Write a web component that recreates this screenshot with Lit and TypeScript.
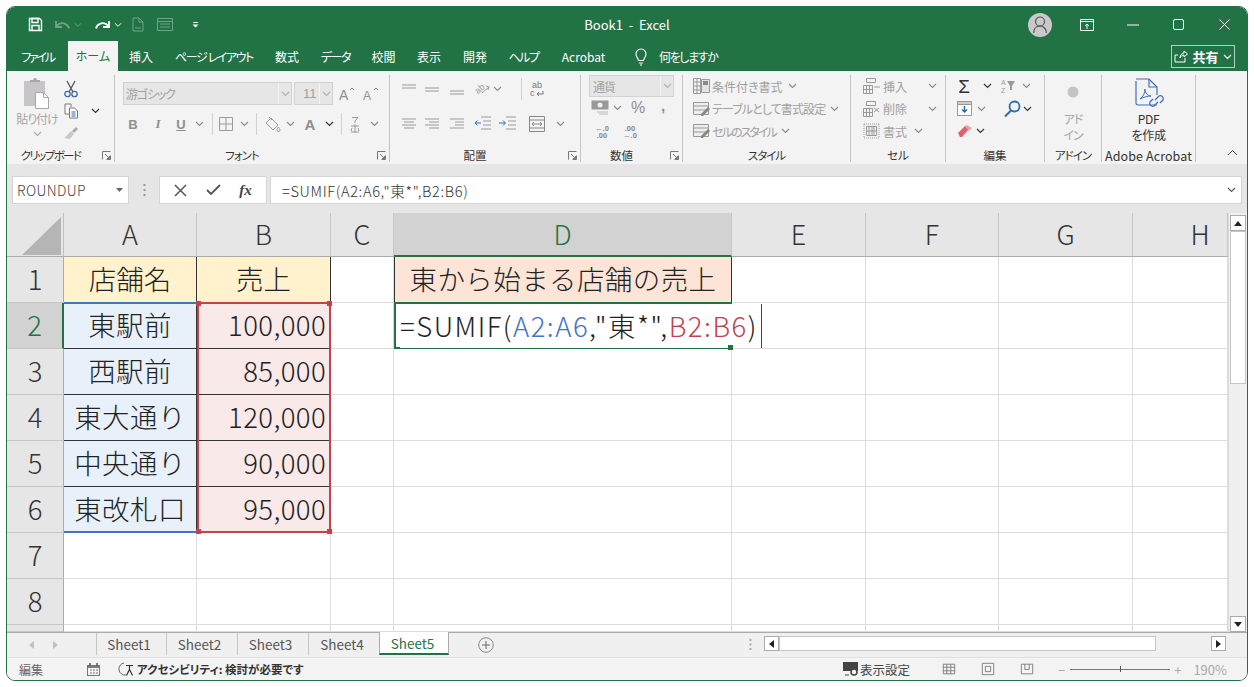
import { LitElement, html, css, TemplateResult } from "lit";
import { customElement } from "lit/decorators.js";

type Slot = [number, number, TemplateResult | string];

const GREY = "#9b9b9b";

const chev = (c = "#8a8a8a") => html`<svg width="9" height="6" viewBox="0 0 9 6"><path d="M1 1l3.5 3.5L8 1" fill="none" stroke=${c} stroke-width="1.1"/></svg>`;
const chevB = () => chev("#333");
const sep = () => html`<span class="vsep"></span>`;
const lines = (d: string, c = GREY, size = 16) => html`<svg width=${size} height=${size} viewBox="0 0 16 16"><path d=${d} fill="none" stroke=${c} stroke-width="1"/></svg>`;
const launcher = () => html`<svg width="9" height="9" viewBox="0 0 9 9"><path d="M.5 8.5v-8h8M4.5 8.5h4v-4M3 3l4.5 4.5M7.5 5v2.5H5" fill="none" stroke="#777" stroke-width="1"/></svg>`;

// places items by their centre x, leaving the gaps as flow margins
function placed(start: number, items: Slot[], cls = "") {
  let x = start;
  return html`<div class="row ${cls}">
    ${items.map(([c, w, t]) => {
      const left = c - w / 2 - x;
      x = c + w / 2;
      return html`<span class="slot" style="width:${w}px;margin-left:${left}px">${t}</span>`;
    })}
  </div>`;
}

const stackRow = (icon: TemplateResult, text: string, extra?: TemplateResult, cls = "") => html`
  <div class="stack-row">${icon}<span class="stack-text ${cls}">${text}</span>${extra ?? ""}</div>`;

const columns = [
  ["A", "col"], ["B", "col"], ["C", "col"], ["D", "col on"], ["E", "col"], ["F", "col"], ["G", "col"], ["H", "col cut"],
];
const rows = [
  ["店舗名", "売上"],
  ["東駅前", "100,000"],
  ["西駅前", "85,000"],
  ["東大通り", "120,000"],
  ["中央通り", "90,000"],
  ["東改札口", "95,000"],
  ["", ""],
  ["", ""],
  ["", ""],
];
const tabs = [
  ["ファイル", "k2"], ["ホーム", "active"], ["挿入", ""], ["ページ レイアウト", "k1"], ["数式", ""], ["データ", "k1"],
  ["校閲", ""], ["表示", ""], ["開発", ""], ["ヘルプ", "k1"], ["Acrobat", ""],
];

@customElement("app-root")
export class AppRoot extends LitElement {
  static styles = css`
    :host {
      display: block;
      width: 1254px;
      height: 687px;
      padding: 6px;
      box-sizing: border-box;
      background: #fff;
      font-family: "Noto Sans CJK JP", "Noto Sans", sans-serif;
      font-feature-settings: "palt";
      color: #333;
      overflow: hidden;
    }
    .window {
      width: 1242px;
      height: 675px;
      box-sizing: border-box;
      border: 1px solid #217346;
      border-radius: 9px;
      overflow: hidden;
      display: flex;
      flex-direction: column;
      background: #f3f3f3;
    }

    /* title bar */
    .title {
      height: 35px;
      background: #217346;
      display: grid;
      grid-template-columns: 1fr auto 1fr;
      align-items: center;
      color: #fff;
    }
    .title .name { font-size: 13px; font-feature-settings: normal; white-space: pre; }
    .title .row { height: 35px; }
    .controls { display: flex; justify-content: flex-end; }
    .ctl-pad { width: 16px; }
    .avatar {
      width: 24px; height: 24px; border-radius: 50%; background: #c9c9c9;
      display: flex; align-items: center; justify-content: center;
    }
    .tabs {
      height: 29px;
      background: #217346;
      display: grid;
      grid-template-columns: 61px 50px 46px 100px 46px 51px 45px 46px 46px 51px 69px 1fr auto;
      align-items: center;
      color: #fff;
      font-size: 12px;
    }
    .tabs .tab { text-align: center; line-height: 29px; white-space: pre; }
    .tabs .tab.active { background: #f3f3f3; color: #217346; height: 30px; margin-top: -1px; }
    .k1 { letter-spacing: -1.4px; }
    .k2 { letter-spacing: -2.2px; }
    .tell { display: flex; align-items: center; padding-left: 17px; gap: 12px; letter-spacing: -1.4px; }
    .share {
      width: 64px; height: 23px; margin-right: 12px; border: 1px solid #a8d5bc;
      display: flex; align-items: center; justify-content: center; gap: 4px;
      font-size: 13px; font-weight: 700; box-sizing: border-box;
    }

    /* ribbon */
    .ribbon {
      height: 93px;
      background: #f3f3f3;
      display: grid;
      grid-template-columns: 108px 275px 191px 102px 168px 95px 99px 57px 94px 1fr;
      align-items: start;
    }
    .group {
      height: 87px;
      margin-top: 4px;
      border-right: 1px solid #c4c4c4;
      display: flex;
      flex-direction: column;
      box-sizing: border-box;
    }
    .group.last { border: none; position: relative; }
    .body { height: 74px; flex: none; }
    .label {
      height: 13px; display: flex; align-items: center; font-size: 11.5px; color: #333; line-height: 13px;
    }
    .label b { font-weight: 400; flex: 1; text-align: center; white-space: nowrap; }
    .label b.t1 { letter-spacing: -1px; }
    .label b.t2 { letter-spacing: -1.6px; }
    .label b.wide { font-size: 12.5px; letter-spacing: 0.1px; font-feature-settings: normal; }
    .label i { width: 20px; display: flex; justify-content: flex-end; padding-right: 3px; box-sizing: border-box; }
    .row { display: flex; align-items: center; height: 22px; }
    .slot { display: flex; align-items: center; justify-content: center; flex: none; white-space: nowrap; }
    .vsep { width: 1px; height: 22px; background: #d0d0d0; display: block; }

    .clip { display: flex; }
    .paste { width: 60px; display: flex; flex-direction: column; align-items: center; color: #a6a6a6; font-size: 12px; padding-top: 3px; letter-spacing: -1px; }
    .paste span { line-height: 14px; margin-top: 3px; }
    .paste svg:last-child { margin-top: 5px; }
    .clip-pad { height: 3px; }

    .font-body { padding: 7px 0 0 0; box-sizing: border-box; }
    .combo {
      display: flex; height: 23px; background: #e6e6e6; border: 1px solid #d2d2d2; box-sizing: border-box;
      font-size: 12px; color: #a0a0a0; align-items: center; padding-left: 2px;
    }
    .combo .txt { flex: 1; letter-spacing: -1.2px; }
    .combo .drop { width: 12px; height: 100%; border-left: 1px solid #f3f3f3; display: flex; align-items: center; justify-content: center; }
    .font-name { width: 169px; }
    .font-size { width: 39px; margin-left: 2px; font-family: "Liberation Sans", sans-serif; font-size: 13px; padding-left: 8px; }
    .font-size .txt { letter-spacing: 0; }
    .font-top { display: flex; align-items: center; padding-left: 8px; }
    .font-body .row.second { margin-top: 8px; }
    .align-body { padding-top: 3px; box-sizing: border-box; }
    .align-body .row.second { margin-top: 13px; }
    .letter { color: #8f8f8f; font-size: 13px; font-weight: 700; font-family: "Liberation Sans", sans-serif; }
    .letter.it { font-style: italic; font-family: "Liberation Serif", serif; }
    .letter.un { text-decoration: underline; }
    .letter.lg { font-size: 15px; }
    .letter.comma { font-size: 15px; margin-top: -6px; }
    .num-combo { width: 85px; margin-left: 8px; height: 22px; padding-left: 3px; }
    .num-row { height: 20px; margin-top: 1px; }
    .num-row.low { margin-top: 4px; }
    .pct { font-size: 16px; color: #8f8f8f; font-family: "Liberation Sans", sans-serif; }
    .dec { font-family: "Liberation Sans", sans-serif; font-size: 7.5px; line-height: 7px; color: #888; text-align: center; white-space: pre; font-weight: 700; }

    .stack { padding-top: 0; box-sizing: border-box; }
    .stack-row { height: 22.5px; display: flex; align-items: center; padding-left: 10px; gap: 1px; color: #a0a0a0; font-size: 12px; white-space: nowrap; }
    .stack-text { margin-right: 4px; }
    .stack-text.s1 { letter-spacing: -0.9px; }
    .stack-text.s2 { letter-spacing: -1.9px; }
    .cell-body .stack-row { padding-left: 12px; gap: 3px; }
    .far { margin-left: 14px; display: flex; }
    .edit-body .row { height: 22.5px; }
    .sigma { font-size: 19px; line-height: 19px; color: #333; font-family: "Liberation Sans", sans-serif; }
    .big {
      display: flex; flex-direction: column; align-items: center; font-size: 12px; line-height: 16px;
    }
    .addin { color: #a6a6a6; padding-top: 11px; box-sizing: border-box; letter-spacing: -1px; }
    .addin svg { margin-bottom: 13px; }
    .adobe { color: #333; padding-top: 3px; box-sizing: border-box; }
    .adobe .label-top { line-height: 16px; letter-spacing: -0.3px; }
    .collapse { position: absolute; right: 9px; bottom: 1px; }

    /* formula bar */
    .formula {
      height: 49px;
      background: #e6e6e6;
      box-sizing: border-box;
      padding: 12px 5px 9px 5px;
      display: flex;
      align-items: stretch;
    }
    .namebox, .fxbox, .fxinput { background: #fff; border: 1px solid #d4d4d4; box-sizing: border-box; display: flex; align-items: center; }
    .namebox { width: 117px; padding: 0 5px 0 4px; justify-content: space-between; color: #444; font-size: 14px; font-weight: 300; letter-spacing: 0.4px; font-feature-settings: normal; }
    .dots { width: 30px; display: flex; align-items: center; justify-content: center; }
    .fxbox { width: 108px; justify-content: space-around; padding: 0 5px; }
    .fxinput { flex: 1; margin-left: 3px; padding: 0 5px 0 11px; justify-content: space-between; color: #333; font-feature-settings: normal; font-size: 14.6px; font-weight: 300; letter-spacing: 0.65px; }
    .fx { font-family: "Liberation Serif", serif; font-style: italic; font-size: 15px; font-weight: 700; color: #444; }

    /* sheet */
    .sheet-wrap { height: 419px; display: flex; background: #fff; }
    .sheet {
      width: 1221px;
      height: 419px;
      position: relative;
      overflow: hidden;
      background: #fff;
      font-weight: 300;
      font-feature-settings: normal;
      font-size: 27.5px;
      color: #222;
    }
    .grid, .overlay {
      display: grid;
      grid-template-columns: 57px 133px 134px 63px 338px 134px 133px 134px 95px;
      grid-template-rows: 44px repeat(8, 46px) 7px;
      height: 419px;
    }
    .overlay { position: absolute; inset: 0; pointer-events: none; }
    .corner { background: #e6e6e6; border-right: 1px solid #c0c0c0; border-bottom: 1px solid #ababab; display: flex; justify-content: flex-end; align-items: flex-end; padding: 0 2px 1px 0; box-sizing: border-box; }
    .col, .rownum { background: #e6e6e6; display: flex; align-items: center; justify-content: center; box-sizing: border-box; color: #333; overflow: hidden; }
    .col { border-right: 1px solid #c6c6c6; border-bottom: 1px solid #ababab; font-size: 27px; padding-bottom: 2px; }
    .col.cut { padding-left: 40px; }
    .col.on { background: #d2d2d2; color: #217346; border-bottom: 2px solid #217346; }
    .rownum { border-right: 1px solid #ababab; border-bottom: 1px solid #c6c6c6; padding-bottom: 4px; }
    .rownum.on { background: #d2d2d2; color: #217346; border-right: 2px solid #217346; }
    .cell {
      box-sizing: border-box; border-right: 1px solid #dcdcdc; border-bottom: 1px solid #dcdcdc;
      display: flex; align-items: center; justify-content: center; white-space: nowrap; padding-bottom: 4px;
    }
    .cell.a { background: #e8f0fa; border-color: #333; letter-spacing: 0.4px; }
    .cell.b { background: #f9e9e9; border-color: #333; justify-content: flex-end; padding-right: 4px; letter-spacing: 0.4px; }
    .cell.h { background: #fff2cc; border-color: #333; justify-content: center; padding-right: 0; }
    .cell.title-cell { background: #fce4d6; border: 1px solid #333; border-top: none; letter-spacing: 0.4px; }
    .range { grid-row: 3 / 8; box-sizing: border-box; position: relative; margin-top: -1px; }
    .range.blue { grid-column: 2; border-top: 2px solid #4472c4; border-bottom: 2px solid #4472c4; }
    .range.red { grid-column: 3; border: 2px solid #c0434f; }
    .knob { position: absolute; width: 5px; height: 5px; background: #c0434f; }
    .knob.tl { left: -3px; top: -3px; }
    .knob.tr { right: -3px; top: -3px; }
    .knob.bl { left: -3px; bottom: -3px; }
    .knob.br { right: -3px; bottom: -3px; }
    .editor {
      grid-column: 5; grid-row: 3; box-sizing: border-box; border: 2px solid #217346; margin-top: -1px; position: relative;
      display: flex; align-items: center; padding: 0 0 0 4px;
    }
    .editor .text { background: #fff; white-space: nowrap; padding-right: 3px; border-right: 1px solid #444; line-height: 42px; height: 44px; flex: none; letter-spacing: 1.5px; margin-top: -2px; margin-bottom: -2px; }
    .ref1 { color: #4472c4; }
    .ref2 { color: #c0434f; }
    .editor .handle { position: absolute; right: -3px; bottom: -3px; width: 5px; height: 5px; background: #217346; }

    .vscroll { flex: 1; background: #f0f0f0; display: flex; flex-direction: column; padding: 2px 1px 0 1px; box-sizing: border-box; border-left: 1px solid #dcdcdc; }
    .vbtn { height: 16px; background: #fff; border: 1px solid #ababab; box-sizing: border-box; display: flex; align-items: center; justify-content: center; flex: none; }
    .vthumb { height: 153px; background: #fff; border: 1px solid #c6c6c6; box-sizing: border-box; }
    .vgap { flex: 1; }

    /* tabs and status */
    .sheetbar {
      height: 25px; background: #f0f0f0; border-top: 1px solid #ababab; box-sizing: border-box;
      display: flex; align-items: flex-start; font-size: 13.5px; color: #555; position: relative; font-feature-settings: normal;
    }
    .nav { width: 89px; height: 23px; display: flex; gap: 19px; align-items: center; padding-left: 22px; box-sizing: border-box; flex: none; }
    .stab { height: 22px; display: flex; align-items: center; justify-content: center; width: 71px; box-sizing: border-box; border-right: 1px solid #c6c6c6; flex: none; padding-right: 5px; }
    .stab.first { border-left: 1px solid #c6c6c6; }
    .stab.active { background: #fff; color: #217346; border-left: 1px solid #ababab; border-right: 1px solid #ababab; border-bottom: 2px solid #217346; height: 23px; margin-top: -1px; margin-left: -1px; width: 70px; padding-right: 3px; }
    .stab.last-plain { border-right: none; }
    .add { margin-left: 29px; height: 23px; display: flex; align-items: center; }
    .bar-fill { flex: 1; }
    .hdots { width: 15px; height: 23px; display: flex; align-items: center; }
    .hscroll { width: 462px; margin-right: 21px; height: 18px; margin-top: 3px; display: flex; flex: none; }
    .hbtn { width: 15px; height: 15px; background: #fff; border: 1px solid #ababab; box-sizing: border-box; display: flex; align-items: center; justify-content: center; flex: none; }
    .hthumb { width: 377px; height: 15px; background: #fff; border: 1px solid #c6c6c6; box-sizing: border-box; flex: none; }
    .hgap { flex: 1; }
    .status {
      height: 23px; background: #f3f3f3; border-top: 1px solid #e0e0e0; box-sizing: border-box;
      display: flex; align-items: center; font-size: 12px; color: #555;
    }
    .status .mode { width: 80px; padding-left: 12px; box-sizing: border-box; color: #666; flex: none; }
    .status .acc { display: flex; align-items: center; gap: 3px; margin-left: 18px; font-weight: 700; color: #333; font-size: 11.5px; }
    .status .spacer { flex: 1; }
    .disp { display: flex; align-items: center; gap: 1px; font-size: 12.5px; color: #444; margin-right: 32px; }
    .views { display: flex; gap: 25px; align-items: center; margin-right: 24px; }
    .zoom { display: flex; align-items: center; color: #aaa; font-size: 13px; margin-right: 20px; font-feature-settings: normal; }
    .track { width: 100px; height: 1px; background: #777; margin: 0 4px 0 5px; display: flex; justify-content: center; align-items: center; }
    .track span { width: 1px; height: 6px; background: #555; }
    .pct-zoom { margin-left: 12px; }
  `;

  private qat() {
    const dim = "#6fa587";
    return placed(7, [
      [35, 16, html`<svg width="15" height="15" viewBox="0 0 15 15"><path d="M1.5 1.5h10l2 2v10h-12z" fill="none" stroke="#fff" stroke-width="1.4"/><path d="M4 1.5h6v4H4zM4 13.5v-5h7v5" fill="none" stroke="#fff" stroke-width="1.4"/></svg>`],
      [62, 18, html`<svg width="16" height="12" viewBox="0 0 16 12"><path d="M15 9.5C14 5 9 3 5 5L2 7.5M2 2v6h6" fill="none" stroke=${dim} stroke-width="1.8"/></svg>`],
      [78, 8, chev(dim)],
      [103, 18, html`<svg width="16" height="12" viewBox="0 0 16 12"><path d="M1 9.5C2 5 7 3 11 5l3 2.5M14 2v6H8" fill="none" stroke="#fff" stroke-width="1.8"/></svg>`],
      [118, 8, chev("#fff")],
      [138, 14, html`<svg width="12" height="15" viewBox="0 0 12 15"><path d="M1 14V1h6l4 4v9zM7 1v4h4M3 11h6" fill="none" stroke=${dim}/></svg>`],
      [165, 16, html`<svg width="16" height="13" viewBox="0 0 16 13"><path d="M.5.5h15v12H.5zM.5 3.5h15M3 6h10M3 9h10" fill="none" stroke=${dim}/></svg>`],
      [195, 8, html`<svg width="7" height="6" viewBox="0 0 7 6"><path d="M1 .5h5" stroke="#fff"/><path d="M.5 2.5h6L3.5 5.5z" fill="#fff"/></svg>`],
    ]);
  }

  private controls() {
    return html`<div class="controls">
      ${placed(1028, [
        [1040, 24, html`<span class="avatar"><svg width="14" height="18" viewBox="0 0 14 18"><circle cx="7" cy="5.5" r="4.5" fill="none" stroke="#555" stroke-width="1.2"/><path d="M.7 17c0-4 2.5-7 6.3-7s6.3 3 6.3 7" fill="none" stroke="#555" stroke-width="1.2"/></svg></span>`],
        [1087, 16, html`<svg width="14" height="12" viewBox="0 0 14 12"><path d="M.5.5h13v11H.5zM.5 2.5h13M7 10V5M5 7l2-2 2 2" fill="none" stroke="#fff"/></svg>`],
        [1133, 14, html`<svg width="12" height="2" viewBox="0 0 12 2"><path d="M0 1h12" stroke="#fff" stroke-width="1"/></svg>`],
        [1178, 14, html`<svg width="11" height="11" viewBox="0 0 11 11"><rect x=".5" y=".5" width="10" height="10" rx="1.5" fill="none" stroke="#fff"/></svg>`],
        [1224, 14, html`<svg width="11" height="11" viewBox="0 0 11 11"><path d="M.5.5l10 10M10.5.5l-10 10" stroke="#fff"/></svg>`],
      ])}
      <span class="ctl-pad"></span>
    </div>`;
  }

  private clipboard() {
    return html`<div class="group">
      <div class="body clip">
        <div class="paste">
          <svg width="28" height="31" viewBox="0 0 28 31">
            <rect x="1" y="3" width="21" height="25" fill="#c8c5c9"/>
            <path d="M7 4V2h3l1-2h2l1 2h3v2z" fill="#a9a6a9"/>
            <path d="M12.5 14.5h8l5 5v11h-13z" fill="#fff" stroke="#a8a8a8"/>
            <path d="M20.5 14.5v5h5" fill="none" stroke="#a8a8a8"/>
          </svg>
          <span>貼り付け</span>
          ${chev("#aaa")}
        </div>
        <div>
          <div class="clip-pad"></div>
          ${placed(67, [[71, 16, html`<svg width="14" height="18" viewBox="0 0 14 18"><circle cx="3.5" cy="14" r="2.7" fill="none" stroke="#3b6ea8" stroke-width="1.3"/><circle cx="10.5" cy="14" r="2.7" fill="none" stroke="#3b6ea8" stroke-width="1.3"/><path d="M5 12L11 1M9 12L3 1" stroke="#555" stroke-width="1.3"/></svg>`]])}
          ${placed(67, [
            [71, 16, html`<svg width="15" height="16" viewBox="0 0 15 16"><path d="M1 1h6v3M1 1v10h4" fill="#fff" stroke="#777"/><path d="M5.5 5h5l3 3v7h-8z" fill="#fff" stroke="#777"/><path d="M7.5 9h4M7.5 11h4M7.5 13h4" stroke="#2d6da8"/></svg>`],
            [95, 10, chevB()],
          ])}
          ${placed(67, [[71, 16, html`<svg width="16" height="15" viewBox="0 0 16 15"><path d="M9 5l4-4 2 2-4 4z" fill="#aaa"/><path d="M8 5l3 3-4 5-6-1c2-1 4-4 7-7z" fill="#c9c9c9"/></svg>`]])}
        </div>
      </div>
      <div class="label"><b class="t2">クリップボード</b><i>${launcher()}</i></div>
    </div>`;
  }

  private fontGroup() {
    const up = (s: number) => html`<svg width="16" height="18" viewBox="0 0 16 18"><text x="0" y="15" font-size=${s} font-family="Liberation Sans" fill="#8f8f8f">A</text><path d="M11 5l2-2 2 2" fill="none" stroke="#8f8f8f"/></svg>`;
    return html`<div class="group">
      <div class="body font-body">
        <div class="font-top">
          <div class="combo font-name"><span class="txt">游ゴシック</span><span class="drop">${chev("#b0b0b0")}</span></div>
          <div class="combo font-size"><span class="txt">11</span><span class="drop">${chev("#b0b0b0")}</span></div>
          ${placed(333, [[347, 16, up(14)], [371, 16, up(12)]])}
        </div>
        ${placed(115, [
          [133, 14, html`<span class="letter">B</span>`],
          [158, 14, html`<span class="letter it">I</span>`],
          [181, 14, html`<span class="letter un">U</span>`],
          [199, 9, chev()],
          [212, 3, sep()],
          [226, 16, lines("M1.5 1.5h13v13h-13zM8 1.5v13M1.5 8h13")],
          [244, 9, chev()],
          [256, 3, sep()],
          [272, 18, html`<svg width="17" height="16" viewBox="0 0 17 16"><path d="M7 2l7 7-5 5-7-7z" fill="none" stroke="#999"/><path d="M14.5 11c1 1.5 1.5 2 1.5 3a1.5 1.5 0 0 1-3 0c0-1 .5-1.5 1.5-3zM5 1l3 3" fill="none" stroke="#999"/></svg>`],
          [290, 9, chev()],
          [310, 14, html`<span class="letter lg">A</span>`],
          [329, 9, chevB()],
          [341, 3, sep()],
          [355, 14, html`<svg width="10" height="17" viewBox="0 0 10 17"><path d="M2 1.5h6L5 5M5 5v2M1 10h8M5 8v9M2 12l-1 3M8 12l1 3M1 16h8" fill="none" stroke="#999"/></svg>`],
          [374, 9, chev()],
        ], "second")}
      </div>
      <div class="label"><b class="t1">フォント</b><i>${launcher()}</i></div>
    </div>`;
  }

  private alignGroup() {
    const l = (d: string) => lines(d);
    return html`<div class="group">
      <div class="body align-body">
        ${placed(390, [
          [409, 16, l("M1 4h14M1 7h14")],
          [432, 16, l("M1 7h14M1 10h14")],
          [457, 16, l("M1 10h14M1 13h14")],
          [482, 18, html`<svg width="18" height="18" viewBox="0 0 18 18"><text x="1" y="12" font-size="9" font-family="Liberation Sans" fill="#999" transform="rotate(-40 6 8)">ab</text><path d="M9 13l7-6M13 6l3 1-1 3" fill="none" stroke="#999"/></svg>`],
          [497, 9, chev()],
          [521, 3, sep()],
          [537, 16, html`<svg width="16" height="20" viewBox="0 0 16 20"><text x="3" y="9" font-size="9" font-family="Liberation Sans" fill="#777">ab</text><text x="1" y="17" font-size="9" font-family="Liberation Sans" fill="#777">c</text><path d="M14 12v3H8M10 13l-2 2 2 2" fill="none" stroke="#777"/></svg>`],
        ])}
        ${placed(390, [
          [409, 16, l("M1 3h14M3 6h10M1 9h14M3 12h10")],
          [432, 16, l("M1 3h14M5 6h10M1 9h14M5 12h10")],
          [457, 16, l("M1 3h14M6 6h9M1 12h14M6 9h9")],
          [482, 17, html`<svg width="17" height="16" viewBox="0 0 17 16"><path d="M7 1h10M9 5h8M9 9h8M7 13h10" stroke="#999" fill="none"/><path d="M1 7h6M3.5 4.5L1 7l2.5 2.5" stroke="#2d6da8" fill="none"/></svg>`],
          [507, 17, html`<svg width="17" height="16" viewBox="0 0 17 16"><path d="M7 1h10M9 5h8M9 9h8M7 13h10" stroke="#999" fill="none"/><path d="M0 7h6M4 4.5L6.5 7 4 9.5" stroke="#2d6da8" fill="none"/></svg>`],
          [537, 18, lines("M.5.5h15v15H.5zM.5 4h15M.5 12h15M3 8h10M5 6L3 8l2 2M11 6l2 2-2 2", "#888", 16)],
          [560, 9, chev()],
        ], "second")}
      </div>
      <div class="label"><b>配置</b><i>${launcher()}</i></div>
    </div>`;
  }

  private numberGroup() {
    return html`<div class="group">
      <div class="body">
        <div class="combo num-combo"><span class="txt">通貨</span><span class="drop">${chev("#b0b0b0")}</span></div>
        ${placed(581, [
          [600, 18, html`<svg width="18" height="16" viewBox="0 0 18 16"><rect x=".5" y=".5" width="17" height="9" fill="#999"/><circle cx="9" cy="5" r="2.5" fill="#eee"/><path d="M6 12h11M8 14h9" stroke="#bbb"/></svg>`],
          [617, 9, chev()],
          [638, 16, html`<span class="pct">%</span>`],
          [663, 10, html`<span class="letter comma">,</span>`],
        ], "num-row")}
        ${placed(581, [
          [602, 20, html`<span class="dec">${"←.0\n.00"}</span>`],
          [630, 20, html`<span class="dec">${".00\n→.0"}</span>`],
        ], "num-row low")}
      </div>
      <div class="label"><b>数値</b><i>${launcher()}</i></div>
    </div>`;
  }

  private styleGroup() {
    const grid = html`<svg width="18" height="16" viewBox="0 0 18 16"><path d="M.5.5h7v15h-7zM.5 4h7M.5 8h7M.5 12h7M4 .5v15" fill="none" stroke="#999"/><path d="M8.5 1.5h8v13h-8z" fill="#e3e3e3" stroke="#999"/><rect x="10" y="3" width="5" height="4" fill="#888"/></svg>`;
    const table = html`<svg width="18" height="16" viewBox="0 0 18 16"><path d="M.5 1.5h15v12H.5zM.5 5h15M.5 9h15" fill="#eee" stroke="#999"/><path d="M8 13l7-7 2 2-7 7H8z" fill="#888"/></svg>`;
    return html`<div class="group">
      <div class="body stack">
        ${stackRow(grid, "条件付き書式", chev())}
        ${stackRow(table, "テーブルとして書式設定", chev(), "s1")}
        ${stackRow(table, "セルのスタイル", chev(), "s2")}
      </div>
      <div class="label"><b class="t1">スタイル</b></div>
    </div>`;
  }

  private cellGroup() {
    const ins = html`<svg width="17" height="16" viewBox="0 0 17 16"><path d="M3.5.5h9v4h-9zM.5 7.5h9v8h-9zM3.5 7.5v8M6.5 7.5v8M.5 11.5h9M11 9h6" fill="none" stroke="#999"/></svg>`;
    const del = html`<svg width="17" height="16" viewBox="0 0 17 16"><path d="M3.5.5h9v4h-9zM.5 7.5h9v8h-9zM3.5 7.5v8M6.5 7.5v8M.5 11.5h9M11 7l5 4M16 7l-5 4" fill="none" stroke="#999"/></svg>`;
    const fmt = html`<svg width="17" height="16" viewBox="0 0 17 16"><path d="M3.5 3.5h10v9h-10zM6 3.5v9M9 3.5v9M11 3.5v9M3.5 8h10" fill="none" stroke="#999"/><path d="M1 1h15M1 15h15M1 1v14M16 1v14" stroke="#999" stroke-dasharray="1 1" fill="none"/></svg>`;
    return html`<div class="group">
      <div class="body stack cell-body">
        ${stackRow(ins, "挿入", html`<span class="far">${chev()}</span>`)}
        ${stackRow(del, "削除", html`<span class="far">${chev()}</span>`)}
        ${stackRow(fmt, "書式", chev())}
      </div>
      <div class="label"><b>セル</b></div>
    </div>`;
  }

  private editGroup() {
    return html`<div class="group">
      <div class="body stack edit-body">
        ${placed(946, [
          [964, 16, html`<span class="sigma">Σ</span>`],
          [987, 9, chevB()],
          [1008, 16, html`<svg width="16" height="18" viewBox="0 0 16 18"><text x="1" y="8" font-size="7" font-family="Liberation Sans" fill="#999">A</text><text x="1" y="16" font-size="7" font-family="Liberation Sans" fill="#999">Z</text><path d="M7 4h8l-3 5v4h-2V9z" fill="#999"/></svg>`],
          [1026, 9, chev()],
        ])}
        ${placed(946, [
          [964, 16, html`<svg width="15" height="15" viewBox="0 0 15 15"><rect x=".5" y=".5" width="14" height="14" fill="#fff" stroke="#999"/><rect x=".5" y=".5" width="14" height="3" fill="#ccc" stroke="#999"/><path d="M7.5 5v6M5 8.5l2.5 2.5L10 8.5" fill="none" stroke="#2d6da8" stroke-width="1.5"/></svg>`],
          [981, 9, chev()],
          [1012, 18, html`<svg width="17" height="17" viewBox="0 0 17 17"><circle cx="10.5" cy="6.5" r="5" fill="none" stroke="#2d6da8" stroke-width="1.8"/><path d="M7 10.5l-6 6" stroke="#2d6da8" stroke-width="2"/></svg>`],
          [1027, 9, chevB()],
        ])}
        ${placed(946, [
          [965, 16, html`<svg width="16" height="13" viewBox="0 0 16 13"><path d="M1 8l7-7 4 3-7 8H3z" fill="#e0616d"/><path d="M8 1l2-1 5 3-3 3z" fill="#f0a0a8"/></svg>`],
          [980, 9, chevB()],
        ])}
      </div>
      <div class="label"><b>編集</b></div>
    </div>`;
  }

  private dataCell(v: string, row: number, col: string) {
    if (row > 5) return html`<div class="cell"></div>`;
    return html`<div class="cell ${row === 0 ? "h" : col}">${v}</div>`;
  }

  private sheetGrid() {
    return html`<div class="sheet">
      <div class="grid">
        <div class="corner"><svg width="39" height="38" viewBox="0 0 39 38"><path d="M39 0v38H0z" fill="#b5b5b5"/></svg></div>
        ${columns.map(([n, c]) => html`<div class=${c}>${n}</div>`)}
        ${rows.map((r, i) => html`
          <div class="rownum ${i === 1 ? "on" : ""}">${i < 8 ? i + 1 : ""}</div>
          ${this.dataCell(r[0], i, "a")}
          ${this.dataCell(r[1], i, "b")}
          <div class="cell"></div>
          ${i === 0
            ? html`<div class="cell title-cell">東から始まる店舗の売上</div>`
            : html`<div class="cell"></div>`}
          <div class="cell"></div><div class="cell"></div><div class="cell"></div><div class="cell"></div>
        `)}
      </div>
      <div class="overlay">
        <div class="range blue"></div>
        <div class="range red">
          <span class="knob tl"></span><span class="knob tr"></span><span class="knob bl"></span><span class="knob br"></span>
        </div>
        <div class="editor">
          <span class="text">=SUMIF(<span class="ref1">A2:A6</span>,"東*",<span class="ref2">B2:B6</span>)</span>
          <span class="handle"></span>
        </div>
      </div>
    </div>`;
  }

  render() {
    return html`<div class="window">
      <div class="title">
        ${this.qat()}
        <span class="name">Book1  -  Excel</span>
        ${this.controls()}
      </div>
      <div class="tabs">
        ${tabs.map(([t, c]) => html`<span class="tab ${c}">${t}</span>`)}
        <span class="tell">
          <svg width="12" height="18" viewBox="0 0 12 18"><path d="M3.5 12.5C3 10 1 9 1 6a5 5 0 0 1 10 0c0 3-2 4-2.5 6.5zM4 15h4M5 17h2" fill="none" stroke="#fff" stroke-width="1.1"/></svg>
          何をしますか
        </span>
        <span class="share">
          <svg width="14" height="13" viewBox="0 0 14 13"><path d="M1 5v7h10V8M1 5h3M6 8c0-3 2-5 4-5V1l3.5 3L10 7V5C8 5 7 6 6 8z" fill="none" stroke="#fff"/></svg>
          共有 ${chev("#fff")}
        </span>
      </div>
      <div class="ribbon">
        ${this.clipboard()}
        ${this.fontGroup()}
        ${this.alignGroup()}
        ${this.numberGroup()}
        ${this.styleGroup()}
        ${this.cellGroup()}
        ${this.editGroup()}
        <div class="group">
          <div class="body big addin">
            <svg width="12" height="12" viewBox="0 0 12 12"><circle cx="6" cy="6" r="5.5" fill="#c4c4c4"/></svg>
            <span>アド</span><span>イン</span>
          </div>
          <div class="label"><b class="t1">アドイン</b></div>
        </div>
        <div class="group">
          <div class="body big adobe">
            <svg width="32" height="33" viewBox="0 0 32 33">
              <path d="M3 1h13l8 8v8M24 27H5a2 2 0 0 1-2-2V3" fill="none" stroke="#3f6fc0" stroke-width="1.2"/>
              <path d="M16 1v8h8" fill="none" stroke="#3f6fc0" stroke-width="1.2"/>
              <path d="M7 21c3-2 5-6 5-10 0 4 3 7 6 7-3 0-7 1-11 3z" fill="none" stroke="#3f6fc0"/>
              <path d="M22 22l4-4a3 3 0 0 1 4 4l-3 3M25 24l-4 4a3 3 0 0 1-4-4l3-3" fill="none" stroke="#3f6fc0" stroke-width="1.3"/>
            </svg>
            <span class="label-top">PDF</span><span class="label-top">を作成</span>
          </div>
          <div class="label"><b class="wide">Adobe Acrobat</b></div>
        </div>
        <div class="group last">
          <span class="collapse"><svg width="11" height="7" viewBox="0 0 11 7"><path d="M1 6l4.5-4.5L10 6" fill="none" stroke="#444"/></svg></span>
        </div>
      </div>
      <div class="formula">
        <div class="namebox">ROUNDUP <svg width="7" height="4" viewBox="0 0 7 4"><path d="M0 0h7L3.5 4z" fill="#666"/></svg></div>
        <div class="dots"><svg width="3" height="13" viewBox="0 0 3 13"><path d="M1.5 0v2M1.5 5v2M1.5 10v2" stroke="#999" stroke-width="2"/></svg></div>
        <div class="fxbox">
          <svg width="13" height="13" viewBox="0 0 13 13"><path d="M1 1l11 11M12 1L1 12" stroke="#555" stroke-width="1.5"/></svg>
          <svg width="15" height="12" viewBox="0 0 15 12"><path d="M1 6l4 4 9-9" fill="none" stroke="#555" stroke-width="1.8"/></svg>
          <span class="fx">fx</span>
        </div>
        <div class="fxinput">
          <span>=SUMIF(A2:A6,"東*",B2:B6)</span>
          ${chev("#555")}
        </div>
      </div>
      <div class="sheet-wrap">
        ${this.sheetGrid()}
        <div class="vscroll">
          <div class="vbtn"><svg width="8" height="5" viewBox="0 0 8 5"><path d="M4 0l4 5H0z" fill="#222"/></svg></div>
          <div class="vthumb"></div>
          <div class="vgap"></div>
          <div class="vbtn"><svg width="8" height="5" viewBox="0 0 8 5"><path d="M0 0h8L4 5z" fill="#222"/></svg></div>
        </div>
      </div>
      <div class="sheetbar">
        <div class="nav">
          <svg width="5" height="8" viewBox="0 0 5 8"><path d="M5 0v8L0 4z" fill="#c0c0c0"/></svg>
          <svg width="5" height="8" viewBox="0 0 5 8"><path d="M0 0v8l5-4z" fill="#c0c0c0"/></svg>
        </div>
        <div class="stab first">Sheet1</div>
        <div class="stab">Sheet2</div>
        <div class="stab">Sheet3</div>
        <div class="stab last-plain">Sheet4</div>
        <div class="stab active">Sheet5</div>
        <div class="add"><svg width="16" height="16" viewBox="0 0 16 16"><circle cx="8" cy="8" r="7.3" fill="none" stroke="#888"/><path d="M8 4v8M4 8h8" stroke="#666"/></svg></div>
        <div class="bar-fill"></div>
        <div class="hdots"><svg width="3" height="11" viewBox="0 0 3 11"><path d="M1.5 0v2M1.5 4.5v2M1.5 9v2" stroke="#aaa" stroke-width="2"/></svg></div>
        <div class="hscroll">
          <div class="hbtn"><svg width="5" height="8" viewBox="0 0 5 8"><path d="M5 0v8L0 4z" fill="#222"/></svg></div>
          <div class="hthumb"></div>
          <div class="hgap"></div>
          <div class="hbtn"><svg width="5" height="8" viewBox="0 0 5 8"><path d="M0 0v8l5-4z" fill="#222"/></svg></div>
        </div>
      </div>
      <div class="status">
        <span class="mode">編集</span>
        <svg width="13" height="13" viewBox="0 0 13 13"><rect x=".5" y="2.5" width="12" height="10" fill="none" stroke="#777"/><path d="M3 0v3M10 0v3M.5 4h12" stroke="#555" stroke-width="1.5"/><path d="M3 7h2M6 7h2M9 7h2M3 10h2M6 10h2M9 10h2" stroke="#777"/></svg>
        <span class="acc">
          <svg width="16" height="15" viewBox="0 0 16 15"><path d="M6 1a6 6 0 1 0 2 12" fill="none" stroke="#666"/><path d="M8 3.5h7M11.5 3.5v4M11.5 7.5l-3 6M11.5 7.5l3 6" fill="none" stroke="#333" stroke-width="1.2"/></svg>
          アクセシビリティ: 検討が必要です
        </span>
        <span class="spacer"></span>
        <span class="disp">
          <svg width="16" height="14" viewBox="0 0 16 14"><rect x="0" y="0" width="15" height="9" fill="#444"/><path d="M2 13h4" stroke="#444"/><circle cx="11" cy="10" r="3" fill="#f3f3f3" stroke="#444" stroke-width="1.5"/></svg>
          表示設定
        </span>
        <span class="views">
          ${lines("M1.5 2.5h13v11h-13zM1.5 6h13M1.5 10h13M5.5 2.5v11M10 2.5v11", "#777", 14)}
          ${lines("M1.5 1.5h13v13h-13zM5 5h6v6H5z", "#777", 14)}
          ${lines("M1.5 2.5h13v11h-13zM5.5 2.5v6h5v-6", "#777", 14)}
        </span>
        <span class="zoom">−<span class="track"><span></span></span>+<span class="pct-zoom">190%</span></span>
      </div>
    </div>`;
  }
}
